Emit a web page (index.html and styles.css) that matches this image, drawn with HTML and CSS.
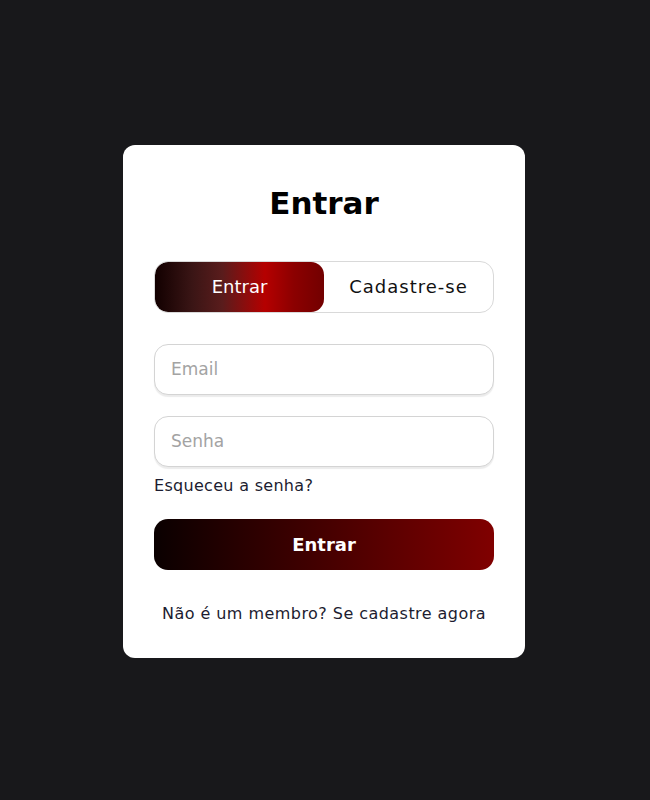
FILE: index.html
```html
<!DOCTYPE html>
<html lang="pt-BR">
<head>
<meta charset="utf-8">
<title>Entrar</title>
<link rel="stylesheet" href="styles.css">
</head>
<body>
<main class="card">
  <h1 class="title">Entrar</h1>
  <div class="toggle">
    <button class="toggle-btn active" type="button">Entrar</button>
    <button class="toggle-btn" type="button">Cadastre-se</button>
  </div>
  <form class="form">
    <input class="field" type="email" placeholder="Email">
    <input class="field field-pass" type="password" placeholder="Senha">
    <a class="forgot" href="#">Esqueceu a senha?</a>
    <button class="submit" type="button">Entrar</button>
  </form>
  <p class="signup">Não é um membro? <a href="#">Se cadastre agora</a></p>
</main>
</body>
</html>
```
FILE: styles.css
```css
* { box-sizing: border-box; }
html, body { margin: 0; padding: 0; }
body {
  background: #18181b;
  min-height: 100vh;
  display: flex;
  align-items: center;
  justify-content: center;
  font-family: "DejaVu Sans", "Noto Sans", sans-serif;
}
.card {
  width: 402px;
  margin: 2px 0 0 -2px;
  background: #fff;
  border-radius: 12px;
  padding: 30px 31px 34px;
  display: flex;
  flex-direction: column;
}
.title {
  margin: 0;
  height: 56px;
  line-height: 56px;
  text-align: center;
  font-size: 31px;
  font-weight: 700;
  color: #000;
}
.toggle {
  margin-top: 30px;
  height: 52px;
  border: 1px solid #d9d9d9;
  border-radius: 14px;
  display: flex;
  overflow: hidden;
}
.toggle-btn {
  flex: 1;
  border: 0;
  background: transparent;
  font-family: inherit;
  font-size: 18px;
  color: #111;
  border-radius: 13px;
  cursor: pointer;
}
.toggle-btn + .toggle-btn { letter-spacing: 1px; }
.toggle-btn.active {
  color: #fff;
  background: linear-gradient(to right, #120000 0%, #3a1515 22%, #5a1c1c 40%, #b50000 65%, #8c0000 82%, #720000 100%);
}
.form {
  margin-top: 31px;
  display: flex;
  flex-direction: column;
}
.field {
  height: 51px;
  border: 1px solid #d4d4d4;
  border-radius: 14px;
  padding: 0 16px;
  font-family: inherit;
  font-size: 17px;
  color: #222;
  box-shadow: 0 2px 1px rgba(0,0,0,0.08);
  outline: none;
}
.field::placeholder { color: #a3a3a3; }
.field-pass { margin-top: 21px; }
.forgot {
  margin-top: 9px;
  line-height: 20px;
  font-size: 16px;
  letter-spacing: 0.3px;
  color: #1c1c30;
  text-decoration: none;
}
.submit {
  margin-top: 23px;
  height: 51px;
  border: 0;
  border-radius: 14px;
  background: linear-gradient(to right, #0a0000, #800000);
  color: #fff;
  font-family: inherit;
  font-size: 18px;
  font-weight: 700;
  cursor: pointer;
}
.signup {
  margin: 34px 0 0;
  line-height: 20px;
  text-align: center;
  font-size: 16px;
  letter-spacing: 0.45px;
  color: #1c1c30;
}
.signup a { color: inherit; text-decoration: none; }
```
